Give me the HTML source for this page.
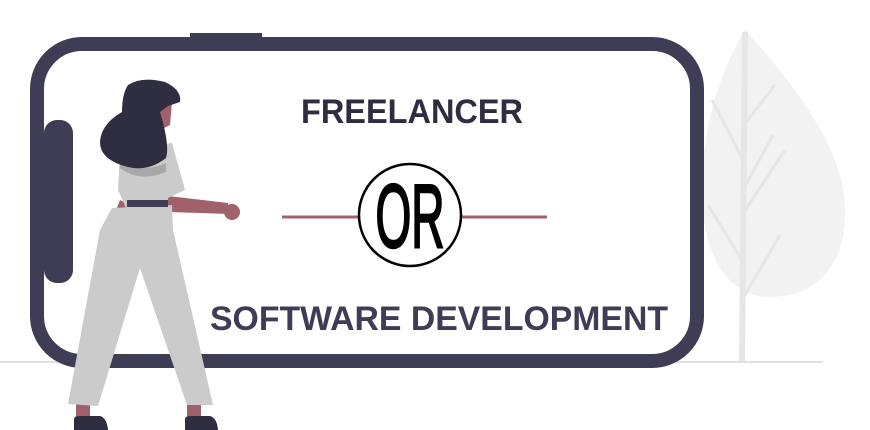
<!DOCTYPE html>
<html><head><meta charset="utf-8"><style>
html,body{margin:0;padding:0;background:#fff;width:870px;height:430px;overflow:hidden}
svg{display:block}
</style></head><body>
<svg width="870" height="430" viewBox="0 0 870 430" xmlns="http://www.w3.org/2000/svg">
<path d="M745 30 C715 80 700 140 702 200 C705 260 730 297 770 297 C820 297 848 260 845 205 C842 150 800 90 745 30 Z" fill="#f2f2f2"/>
<path d="M745 32 L742 362" stroke="#e6e6e6" stroke-width="6" fill="none"/>
<path d="M743 160 L712 100 M744 125 L775 85 M743 190 L773 135 M742 215 L785 150 M742 260 L708 205 M742 300 L780 235" stroke="#e6e6e6" stroke-width="3" fill="none"/>
<line x1="0" y1="362" x2="823" y2="362" stroke="#e0e0e0" stroke-width="2"/>
<rect x="37" y="44" width="660" height="317" rx="45" fill="#fff" stroke="#3f3d56" stroke-width="14"/>
<rect x="190" y="33" width="72" height="7" fill="#3f3d56"/>
<rect x="44" y="120" width="29" height="163" rx="13" fill="#3f3d56"/>
<text x="412" y="123" text-anchor="middle" font-family="Liberation Sans, sans-serif" font-weight="bold" font-size="34" fill="#2f2e41" textLength="222" lengthAdjust="spacingAndGlyphs">FREELANCER</text>
<line x1="282" y1="217" x2="358" y2="217" stroke="#a0616a" stroke-width="3"/>
<line x1="462" y1="217" x2="547" y2="217" stroke="#a0616a" stroke-width="3"/>
<circle cx="410" cy="215" r="51" fill="#fff" stroke="#000" stroke-width="2.5"/>
<text x="410" y="247" text-anchor="middle" font-family="Liberation Sans Narrow, Liberation Sans, sans-serif" font-size="90" fill="#000" stroke="#000" stroke-width="2.5" textLength="69" lengthAdjust="spacingAndGlyphs">OR</text>
<text x="439" y="330" text-anchor="middle" font-family="Liberation Sans, sans-serif" font-weight="bold" font-size="34" fill="#3f3d56" textLength="458" lengthAdjust="spacingAndGlyphs">SOFTWARE DEVELOPMENT</text>
<rect x="76" y="395" width="14" height="25" fill="#a0616a"/>
<rect x="187" y="395" width="14" height="25" fill="#a0616a"/>
<path d="M74 430 L74 419 Q74 416 80 416 L100 416 Q107 418 108 430 Z" fill="#2f2e41"/>
<path d="M185 430 L185 419 Q185 416 191 416 L210 416 Q217 418 218 430 Z" fill="#2f2e41"/>
<path d="M168 196 L228 203 L230 214 L168 212 Z" fill="#a0616a"/>
<circle cx="232" cy="212" r="8" fill="#a0616a"/>
<path d="M120 200 L113 218 L125 225 L130 205 Z" fill="#a0616a"/>
<path d="M112 208 L172 205 L173 230 L213 405 L187 405 L140 268 L98 406 L68 404 L100 230 Z" fill="#cbcbcb"/>
<path d="M120 150 L172 143 L185 190 L168 198 L168 208 L126 208 L118 190 Z" fill="#cbcbcb"/>
<path d="M120 158 Q140 175 166 163 L166 172 Q140 183 120 168 Z" fill="#a8a8a8"/>
<rect x="127" y="200" width="41" height="7" fill="#3f3d56"/>
<path d="M155 100 L172 102 L170 125 L160 130 Z" fill="#a0616a"/>
<path d="M128 85 Q142 76 165 82 Q182 90 180 102 L168 106 L160 112 Q170 145 166 158 Q148 172 128 167 Q100 160 100 142 Q101 124 122 112 Q122 94 128 85 Z" fill="#2f2e41"/>
</svg>
</body></html>
